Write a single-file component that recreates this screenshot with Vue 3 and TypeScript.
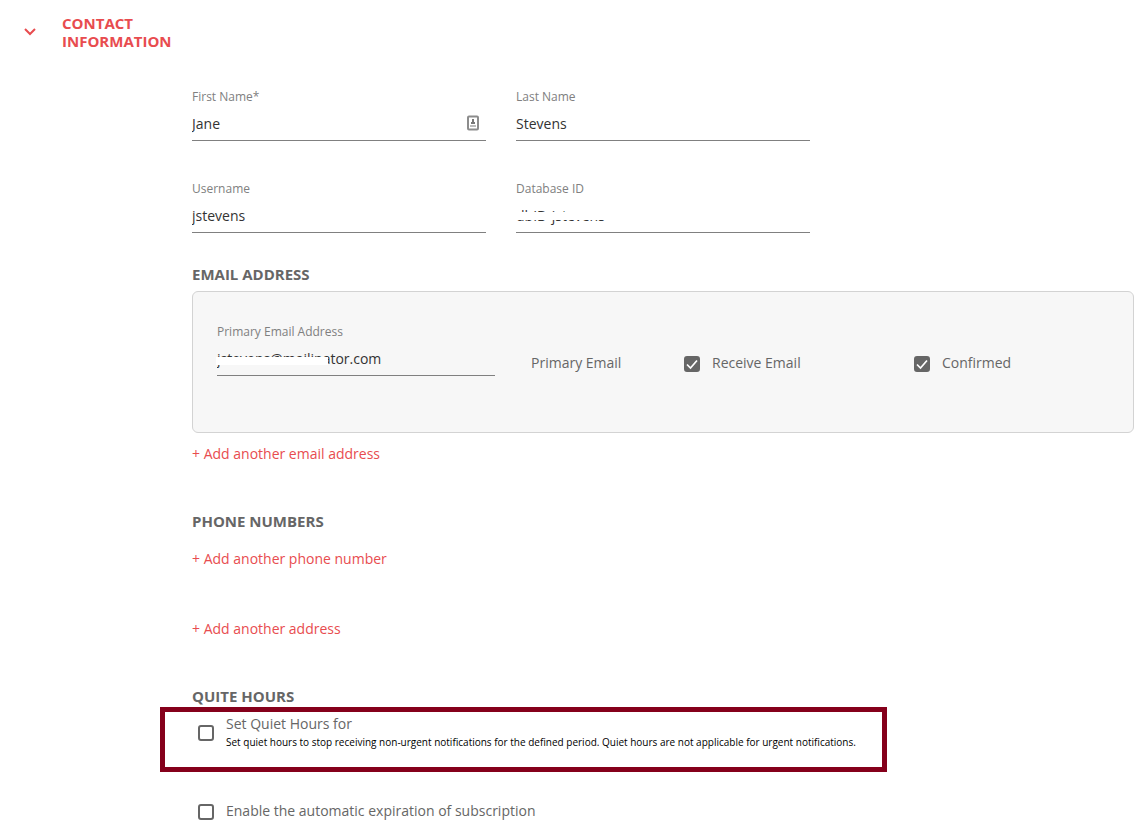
<script setup lang="ts">
import { reactive, ref } from 'vue'

interface Field {
  id: string
  label: string
  value: string
  picker?: boolean
  masked?: boolean
}

const fields = reactive<Field[]>([
  { id: 'first-name', label: 'First Name*', value: 'Jane', picker: true },
  { id: 'last-name', label: 'Last Name', value: 'Stevens' },
  { id: 'username', label: 'Username', value: 'jstevens' },
  { id: 'database-id', label: 'Database ID', value: 'dbID-jstevens', masked: true },
])

const email = ref('jstevens@mailinator.com')
const receiveEmail = ref(true)
const confirmed = ref(true)
const quietHours = ref(false)
const autoExpire = ref(false)
</script>

<template>
  <main class="page">
    <header class="section-head">
      <button class="toggle" type="button" aria-label="Collapse section" aria-expanded="true">
        <svg viewBox="0 0 12 8" width="12" height="8" aria-hidden="true">
          <path d="M1 1 L6 6 L11 1" fill="none" stroke="currentColor" stroke-width="2" />
        </svg>
      </button>
      <h1 class="title">CONTACT INFORMATION</h1>
    </header>

    <form class="content" @submit.prevent>
      <div class="fields">
        <div v-for="f in fields" :key="f.id" class="field">
          <label :for="f.id">{{ f.label }}</label>
          <div class="control">
            <input :id="f.id" v-model="f.value" type="text" />
            <svg v-if="f.picker" class="picker" viewBox="0 0 12 16" width="12" height="16" aria-hidden="true">
              <rect x="1" y="1.5" width="10" height="13" rx="1" fill="#fff" stroke="#8c8c8c" stroke-width="2" />
              <rect x="5" y="4" width="2" height="3" fill="#777" />
              <rect x="4" y="7" width="4" height="2" fill="#777" />
              <rect x="3" y="10" width="6" height="2" fill="#bbb" />
            </svg>
            <span v-if="f.masked" class="mask mask-id"></span>
          </div>
        </div>
      </div>

      <section class="emails">
        <h2>EMAIL ADDRESS</h2>
        <div class="card">
          <div class="field">
            <label for="email">Primary Email Address</label>
            <div class="control">
              <input id="email" v-model="email" type="text" />
              <span class="mask mask-email"></span>
            </div>
          </div>
          <span class="option">Primary Email</span>
          <label class="option"><input v-model="receiveEmail" class="check" type="checkbox" />Receive Email</label>
          <label class="option"><input v-model="confirmed" class="check" type="checkbox" />Confirmed</label>
        </div>
        <a class="add" href="#">+ Add another email address</a>
      </section>

      <section class="phones">
        <h2>PHONE NUMBERS</h2>
        <a class="add" href="#">+ Add another phone number</a>
        <a class="add address" href="#">+ Add another address</a>
      </section>

      <section class="quiet">
        <h2>QUITE HOURS</h2>
        <div class="highlight">
          <input id="quiet" v-model="quietHours" class="check" type="checkbox" aria-describedby="quiet-note" />
          <div>
            <label for="quiet">Set Quiet Hours for</label>
            <p id="quiet-note" class="note">
              Set quiet hours to stop receiving non-urgent notifications for the defined period. Quiet hours are not applicable for urgent notifications.
            </p>
          </div>
        </div>
        <label class="expire"><input v-model="autoExpire" class="check" type="checkbox" />Enable the automatic expiration of subscription</label>
      </section>
    </form>
  </main>
</template>

<style>
body {
  background: #fff;
}
</style>

<style scoped>
.page {
  box-sizing: border-box;
  padding: 14px 5px 0 0;
  font: 14px/18px 'Open Sans', 'Noto Sans', sans-serif;
  color: #666;
}

.section-head {
  display: flex;
  align-items: center;
  gap: 26px;
  padding-left: 24px;
  color: #e84c4f;
}

.toggle {
  display: flex;
  padding: 0;
  border: 0;
  background: none;
  color: inherit;
}

.title,
h2 {
  margin: 0;
  font-size: 15px;
  line-height: 18px;
  font-weight: 700;
}

.title {
  width: 120px;
}

.content {
  margin: 38px 0 0 192px;
}

.fields {
  display: grid;
  grid-template-columns: repeat(2, minmax(0, 294px));
  gap: 39px 30px;
}

.field label {
  display: block;
  font-size: 12px;
  color: #808080;
}

.control {
  position: relative;
  display: flex;
  align-items: center;
  height: 34px;
  border-bottom: 1px solid #808080;
}

.control input {
  flex: 1;
  min-width: 0;
  height: 34px;
  padding: 0;
  border: 0;
  outline: 0;
  background: none;
  font: inherit;
  color: #333;
}

.picker {
  flex: none;
  margin-right: 7px;
}

.mask {
  position: absolute;
  background: #fff;
}

.mask-id {
  left: 0;
  top: 14px;
  width: 94px;
  height: 8px;
}

.mask-email {
  left: -1px;
  top: 16px;
  width: 112px;
  height: 8px;
}

.emails {
  margin-top: 32px;
}

.card {
  display: grid;
  grid-template-columns: 314fr 153fr 230fr 195fr;
  align-items: start;
  margin: 8px 0 12px;
  padding: 31px 24px 56px;
  border: 1px solid #d3d3d3;
  border-radius: 6px;
  background: #f7f7f7;
}

.card .field {
  margin-right: 36px;
}

.option,
.expire {
  display: flex;
  align-items: flex-start;
  gap: 12px;
}

.option {
  margin-top: 31px;
}

.check {
  flex: none;
  box-sizing: border-box;
  width: 16px;
  height: 16px;
  margin: 2px 0 0;
  border: 2px solid #666;
  border-radius: 3px;
  background: #fff;
  appearance: none;
}

.check:checked {
  background: #666 url("data:image/svg+xml,%3Csvg xmlns='http://www.w3.org/2000/svg' viewBox='0 0 12 12'%3E%3Cpath d='M1 6.5 4.5 10 11 2.5' fill='none' stroke='white' stroke-width='1.7'/%3E%3C/svg%3E") center / 12px 12px no-repeat;
}

.add {
  display: block;
  width: fit-content;
  color: #e84c4f;
  text-decoration: none;
}

.phones {
  margin-top: 49px;
}

.phones .add {
  margin-top: 20px;
}

.phones .address {
  margin-top: 52px;
}

.quiet {
  margin-top: 49px;
}

.highlight {
  box-sizing: border-box;
  display: flex;
  align-items: flex-start;
  gap: 12px;
  max-width: 727px;
  min-height: 65px;
  margin: 2px 0 30px -32px;
  padding: 3px 20px 3px 33px;
  border: 5px solid #85001b;
}

.highlight .check {
  margin-top: 10px;
}

.note {
  margin: 0;
  font-size: 10px;
  color: #000;
}

.expire {
  margin-left: 6px;
}
</style>
